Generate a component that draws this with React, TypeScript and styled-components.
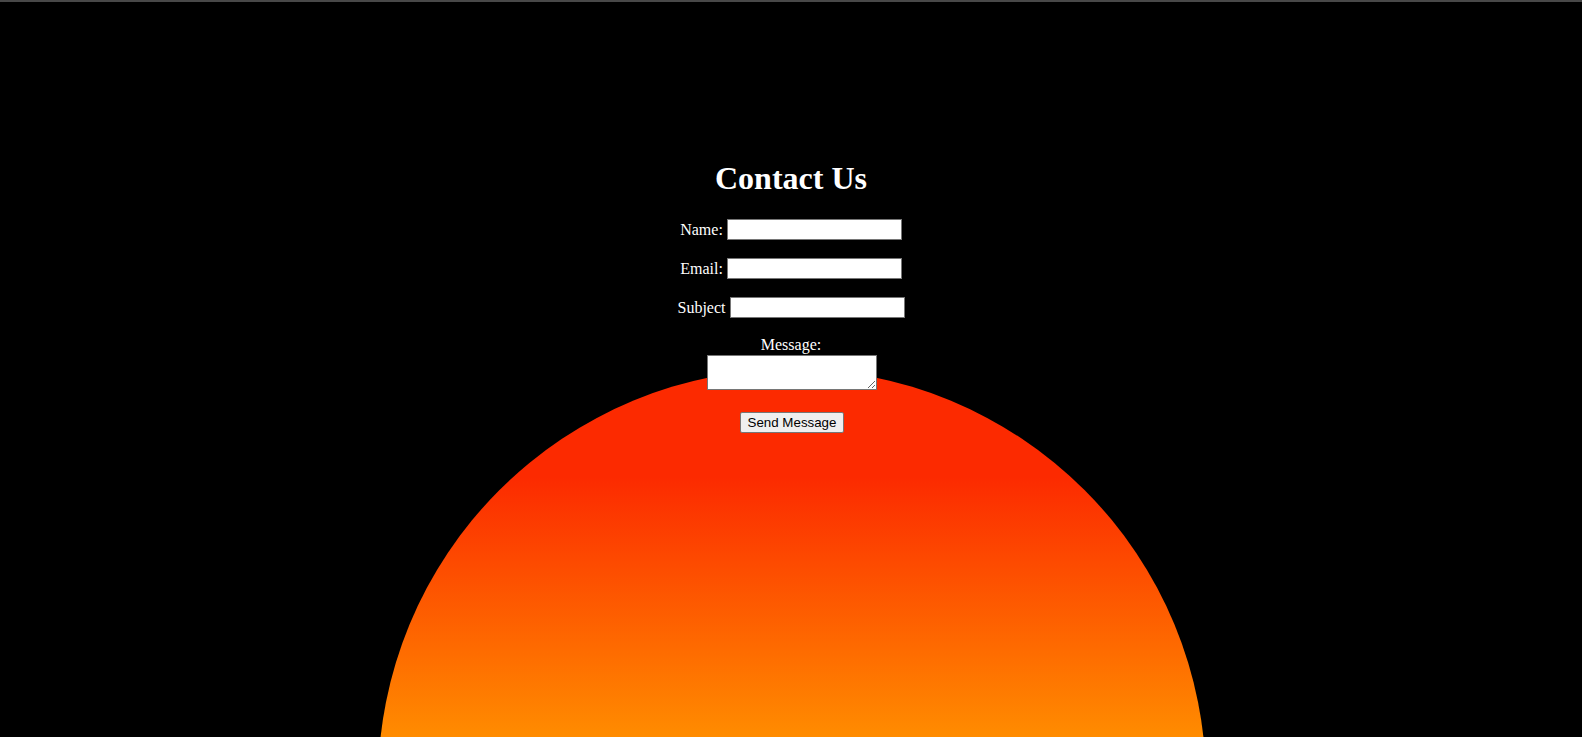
import React from "react";
import styled, { createGlobalStyle } from "styled-components";

const GlobalStyle = createGlobalStyle`
  html, body {
    margin: 0;
    padding: 0;
    background: #000;
  }
  body {
    font-family: "Liberation Serif", "Times New Roman", serif;
    font-size: 16px;
    color: #fff;
    overflow: hidden;
  }
`;

const Page = styled.div`
  position: relative;
  width: 100%;
  height: 737px;
  overflow: hidden;
  background: #000;
`;

const TopBar = styled.div`
  height: 2px;
  background: #484848;
`;

const Sun = styled.div`
  position: absolute;
  left: calc(50% - 413px);
  top: 369px;
  width: 828px;
  height: 828px;
  border-radius: 50%;
  background: linear-gradient(
    180deg,
    #fc2a00 0%,
    #fc2a00 13%,
    #ff8c00 44.5%,
    #ffb300 100%
  );
  z-index: 0;
`;

const Form = styled.form`
  position: relative;
  z-index: 1;
  display: flex;
  flex-direction: column;
  align-items: center;
  padding-top: 158px;
`;

const Title = styled.h1`
  margin: 0;
  font-family: "Liberation Serif", "Times New Roman", serif;
  font-weight: 700;
  font-size: 32px;
  line-height: 37px;
  color: #fff;
`;

const Row = styled.div<{ $top: number }>`
  display: flex;
  align-items: center;
  justify-content: center;
  gap: 4px;
  height: 21px;
  margin-top: ${(p) => p.$top}px;
`;

const Label = styled.label`
  font-size: 16px;
  line-height: 18px;
  color: #fff;
  white-space: nowrap;
`;

const BlockLabel = styled(Label)`
  display: block;
  margin-top: 18px;
`;

const TextInput = styled.input`
  box-sizing: border-box;
  width: 175px;
  height: 21px;
  padding: 1px 2px;
  border: 1px solid #767676;
  background: #fff;
  font-family: "Liberation Sans", Arial, sans-serif;
  font-size: 13.33px;
  outline: none;
`;

const MessageBox = styled.textarea`
  box-sizing: border-box;
  width: 170px;
  height: 35px;
  margin-top: 1px;
  margin-left: 2px;
  padding: 2px;
  border: 1px solid #767676;
  background: #fff;
  font-family: "Liberation Mono", monospace;
  font-size: 13.33px;
  outline: none;
`;

const SendButton = styled.button`
  box-sizing: border-box;
  height: 21px;
  margin-top: 22px;
  margin-left: 2px;
  padding: 1px 7px;
  border: 1px solid #767676;
  border-radius: 2px;
  background: #efefef;
  color: #000;
  font-family: "Liberation Sans", Arial, sans-serif;
  font-size: 13.33px;
  line-height: 15px;
`;

export default function App() {
  return (
    <>
      <GlobalStyle />
      <Page>
        <TopBar />
        <Sun />
        <Form onSubmit={(e) => e.preventDefault()}>
          <Title>Contact Us</Title>
          <Row $top={22}>
            <Label htmlFor="name">Name:</Label>
            <TextInput id="name" type="text" />
          </Row>
          <Row $top={18}>
            <Label htmlFor="email">Email:</Label>
            <TextInput id="email" type="email" />
          </Row>
          <Row $top={18}>
            <Label htmlFor="subject">Subject</Label>
            <TextInput id="subject" type="text" />
          </Row>
          <BlockLabel htmlFor="message">Message:</BlockLabel>
          <MessageBox id="message" />
          <SendButton type="submit">Send Message</SendButton>
        </Form>
      </Page>
    </>
  );
}
